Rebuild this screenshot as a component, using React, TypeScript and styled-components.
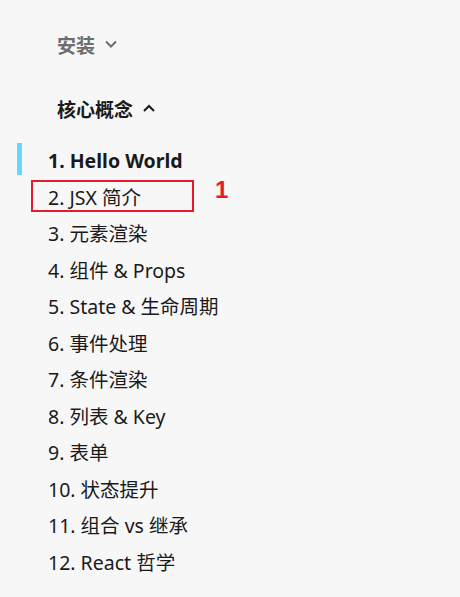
import React from "react";
import styled, { createGlobalStyle } from "styled-components";

const Global = createGlobalStyle`
  html, body { margin: 0; padding: 0; background: #f7f7f7; }
  body { font-family: "Noto Sans", "Noto Sans CJK SC", sans-serif; color: #1a1a1a; }
`;

const Nav = styled.nav`
  width: 460px;
  height: 597px;
  background: #f7f7f7;
  padding-top: 28px;
  box-sizing: border-box;
`;

const Section = styled.div<{ $gap: number }>`
  margin-bottom: ${(p) => p.$gap}px;
`;

const Heading = styled.div<{ $open: boolean }>`
  display: flex;
  align-items: center;
  gap: 10px;
  margin-left: 57px;
  height: 32px;
  font-size: 19px;
  font-weight: 700;
  color: ${(p) => (p.$open ? "#1a1a1a" : "#6d6d6d")};
  font-family: "Noto Sans CJK SC", sans-serif;
`;

const List = styled.ul`
  list-style: none;
  margin: 0;
  padding: 0;
`;

const Item = styled.li<{ $active?: boolean }>`
  position: relative;
  box-sizing: border-box;
  margin-left: 17px;
  padding-left: 26px;
  padding-top: 3px;
  border-left: 5px solid ${(p) => (p.$active ? "#61dafb" : "transparent")};
  height: 32px;
  line-height: 29px;
  margin-bottom: 4.55px;
  font-size: 19.5px;
  font-weight: ${(p) => (p.$active ? 700 : 400)};
  color: #1a1a1a;
  white-space: nowrap;
`;

const Highlight = styled.span`
  position: absolute;
  left: 9px;
  top: 0;
  width: 163px;
  height: 32px;
  box-sizing: border-box;
  border: 2px solid #e8192c;
`;

const Marker = styled.span`
  position: absolute;
  left: 193px;
  top: -2px;
  line-height: 1;
  color: #e8192c;
  font-weight: 700;
  font-size: 24px;
  font-family: "Liberation Sans", sans-serif;
`;

const Chevron = ({ up }: { up?: boolean }) => (
  <svg width="12" height="8" viewBox="0 0 12 8" aria-hidden>
    <path
      d={up ? "M1 7 L6 2 L11 7" : "M1 1.5 L6 6.5 L11 1.5"}
      fill="none"
      stroke="currentColor"
      strokeWidth="2"
    />
  </svg>
);

const items = [
  "2. JSX 简介",
  "3. 元素渲染",
  "4. 组件 & Props",
  "5. State & 生命周期",
  "6. 事件处理",
  "7. 条件渲染",
  "8. 列表 & Key",
  "9. 表单",
  "10. 状态提升",
  "11. 组合 vs 继承",
  "12. React 哲学",
];

export default function App() {
  return (
    <>
      <Global />
      <Nav>
        <Section $gap={32}>
          <Heading $open={false}>
            安装 <Chevron />
          </Heading>
        </Section>
        <Section $gap={19}>
          <Heading $open>
            核心概念 <Chevron up />
          </Heading>
        </Section>
        <List>
          <Item $active>1. Hello World</Item>
          {items.map((t, i) => (
            <Item key={t}>
              {t}
              {i === 0 && (
                <>
                  <Highlight />
                  <Marker>1</Marker>
                </>
              )}
            </Item>
          ))}
        </List>
      </Nav>
    </>
  );
}
